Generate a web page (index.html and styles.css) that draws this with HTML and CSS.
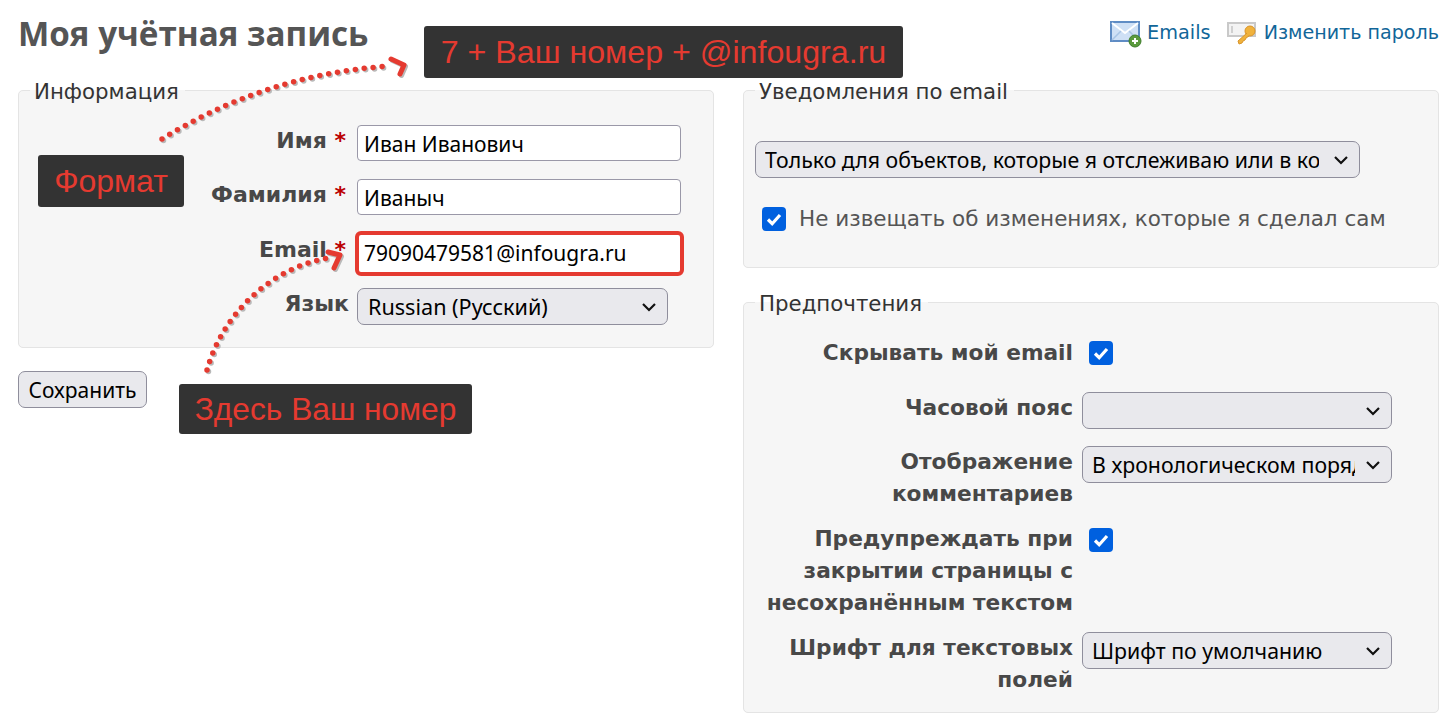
FILE: index.html
```html
<!DOCTYPE html>
<html lang="ru">
<head>
<meta charset="utf-8">
<title>Моя учётная запись</title>
<link rel="stylesheet" href="styles.css">
</head>
<body>
<div class="page">
  <header class="top">
    <h1>Моя учётная запись</h1>
    <nav class="links">
      <a href="#" class="link">
        <svg width="32" height="28" viewBox="0 0 32 28"><rect x="1" y="2" width="28" height="19" fill="#cfe0f5" stroke="#5f8cc4" stroke-width="2"/><path d="M2 3l13 10L28 3" fill="none" stroke="#fff" stroke-width="2"/><path d="M2 20l9-9M28 20l-9-9" stroke="#a8c4e6" stroke-width="1.5"/><circle cx="25" cy="21" r="6" fill="#5a9a3c" stroke="#3f7d2c"/><path d="M25 18v6M22 21h6" stroke="#fff" stroke-width="2"/></svg>
        Emails</a>
      <a href="#" class="link link-key">
        <svg width="30" height="26" viewBox="0 0 30 26"><rect x="1" y="3" width="27" height="13" fill="#f3f3f3" stroke="#c9c9c9" stroke-width="2"/><rect x="4" y="6" width="2" height="7" fill="#d0d0d0"/><circle cx="23" cy="11" r="5" fill="#f0b23c" stroke="#d9942a"/><path d="M20 13L11 21l1 3 3-1 1-2 2-1 1-2 3-2" fill="#f0b23c" stroke="#d9942a"/></svg>
        Изменить пароль</a>
    </nav>
  </header>

  <div class="columns">
    <div class="col">
      <fieldset class="box box-info">
        <legend>Информация</legend>
        <div class="row row-left"><label>Имя <em>*</em></label><input type="text" class="field" value="Иван Иванович"></div>
        <div class="row row-left"><label>Фамилия <em>*</em></label><input type="text" class="field" value="Иваныч"></div>
        <div class="row row-left"><label>Email <em>*</em></label><input type="text" class="field field-hot" value="79090479581@infougra.ru"></div>
        <div class="row row-left"><label>Язык</label>
          <div class="sel sel-lang"><select><option>Russian (Русский)</option></select>
            <svg class="chev" width="16" height="10" viewBox="0 0 16 10"><path d="M2 2l6 6 6-6" fill="none" stroke="#111" stroke-width="2.2"/></svg></div>
        </div>
      </fieldset>
      <button class="save" type="button">Сохранить</button>
    </div>

    <div class="col">
      <fieldset class="box box-notify">
        <legend>Уведомления по email</legend>
        <div class="sel sel-wide"><select><option>Только для объектов, которые я отслеживаю или в которых я участвую</option></select>
          <svg class="chev" width="16" height="10" viewBox="0 0 16 10"><path d="M2 2l6 6 6-6" fill="none" stroke="#111" stroke-width="2.2"/></svg></div>
        <div class="notify-check">
          <span class="check"><svg width="24" height="24" viewBox="0 0 24 24"><path d="M6 12.5l4.2 4.2L18 8" fill="none" stroke="#fff" stroke-width="3.2"/></svg></span>
          <span class="notify-text">Не извещать об изменениях, которые я сделал сам</span>
        </div>
      </fieldset>

      <fieldset class="box box-prefs">
        <legend>Предпочтения</legend>
        <div class="row row-right r1"><label>Скрывать мой email</label>
          <span class="check"><svg width="24" height="24" viewBox="0 0 24 24"><path d="M6 12.5l4.2 4.2L18 8" fill="none" stroke="#fff" stroke-width="3.2"/></svg></span></div>
        <div class="row row-right r2"><label>Часовой пояс</label>
          <div class="sel sel-pref"><select><option></option></select>
            <svg class="chev" width="16" height="10" viewBox="0 0 16 10"><path d="M2 2l6 6 6-6" fill="none" stroke="#111" stroke-width="2.2"/></svg></div></div>
        <div class="row row-right r3"><label>Отображение комментариев</label>
          <div class="sel sel-pref"><select><option>В хронологическом порядке</option></select>
            <svg class="chev" width="16" height="10" viewBox="0 0 16 10"><path d="M2 2l6 6 6-6" fill="none" stroke="#111" stroke-width="2.2"/></svg></div></div>
        <div class="row row-right r4"><label>Предупреждать при закрытии страницы с несохранённым текстом</label>
          <span class="check"><svg width="24" height="24" viewBox="0 0 24 24"><path d="M6 12.5l4.2 4.2L18 8" fill="none" stroke="#fff" stroke-width="3.2"/></svg></span></div>
        <div class="row row-right r5"><label>Шрифт для текстовых полей</label>
          <div class="sel sel-pref"><select><option>Шрифт по умолчанию</option></select>
            <svg class="chev" width="16" height="10" viewBox="0 0 16 10"><path d="M2 2l6 6 6-6" fill="none" stroke="#111" stroke-width="2.2"/></svg></div></div>
      </fieldset>
    </div>
  </div>

  <svg class="arrows" width="1455" height="723" viewBox="0 0 1455 723">
    <g transform="translate(1.5 1.5)" fill="none" stroke="#b9b9b9" stroke-linecap="round">
      <path class="dots" d="M162 139C225 100 300 72 390 66"/>
      <path class="head" d="M391 59l13 6-4 9"/>
      <path class="dots" d="M207 370C222 315 270 268 328 258"/>
      <path class="head" d="M328 252l12 3-6 13"/>
    </g>
    <g fill="none" stroke="#e53a30" stroke-linecap="round">
      <path class="dots" d="M162 139C225 100 300 72 390 66"/>
      <path class="head" d="M391 59l13 6-4 9"/>
      <path class="dots" d="M207 370C222 315 270 268 328 258"/>
      <path class="head" d="M328 252l12 3-6 13"/>
    </g>
  </svg>
  <div class="note note-top">7 + Ваш номер + @infougra.ru</div>
  <div class="note note-format">Формат</div>
  <div class="note note-here">Здесь Ваш номер</div>
</div>
</body>
</html>
```

FILE: styles.css
```css
* { box-sizing: border-box; }
html, body { margin: 0; padding: 0; background: #fff; }
body { font-family: "DejaVu Sans", Verdana, sans-serif; color: #484848; overflow: hidden; }
.page { position: relative; width: 1455px; height: 723px; padding: 0 16px 0 18px; overflow: hidden; }

.top { display: flex; justify-content: space-between; height: 78px; }
h1 { margin: 13px 0 0; font: bold 33.2px/42px "Open Sans", "DejaVu Sans", sans-serif; color: #555; }
.links { display: flex; gap: 16px; padding-top: 19px; }
.link { display: flex; align-items: flex-start; gap: 5px; color: #169; text-decoration: none; font-size: 19.3px; line-height: 28px; }
.link-key { gap: 7px; font-size: 19.1px; }
.link svg { flex: none; margin-top: 1px; }

.columns { display: grid; grid-template-columns: 696px 696px; column-gap: 29px; }
.col { display: flex; flex-direction: column; align-items: flex-start; }

.box { position: relative; width: 100%; margin: 0; background: #f6f6f6; border: 1px solid #e4e4e4; border-radius: 5px; min-width: 0; }
.box legend { height: 24px; padding: 0 6px 0 4px; margin-left: 11px; font-size: 21.3px; line-height: 28px; color: #333; }
.box-info { height: 270px; padding: 23px 0 0; }
.box-notify { height: 190px; padding: 39px 0 0; }
.box-prefs { height: 423px; margin-top: 22px; padding: 26px 0 0; }

.row { display: grid; align-items: start; }
.row label { font-weight: bold; font-size: 22px; line-height: 32px; text-align: right; color: #484848; }
.row em { font-style: normal; color: #b00; margin-right: 3px; }
.row-left { grid-template-columns: 330px auto; column-gap: 8px; height: 54.33px; }
.row-right { grid-template-columns: 329px auto; column-gap: 9px; }
.row-right label { font-size: 21.7px; }
.r1 { height: 52px; }
.r2 { height: 54px; }
.r3 { height: 81px; }
.r4 { height: 105px; }
.r5 { height: 80px; }
.r1 label { margin-top: -3px; }
.r4 label { margin-top: -4px; }

.field { width: 324px; height: 36px; padding: 2px 6px 0; border: 1px solid #9a98a8; border-radius: 4px; background: #fff; font: 21px/32px "Noto Sans", sans-serif; color: #000; outline: none; }
.field-hot { width: 329px; height: 45px; margin: -3px 0 0 -2px; padding: 0 5px; border: 4px solid #e53a30; border-radius: 6px; }

.sel { position: relative; height: 37px; }
.sel select { display: block; width: 100%; height: 100%; padding: 0 36px 0 9px; appearance: none; background: #e9e9ed; border: 1px solid #8f8e9c; border-radius: 7px; font: 21.3px "Noto Sans", sans-serif; color: #000; }
.chev { position: absolute; right: 11px; top: 14px; pointer-events: none; }
.sel-lang { width: 311px; }
.sel-lang select { padding-left: 10px; font-size: 21.6px; }
.sel-wide { width: 605px; margin-left: 11px; }
.sel-wide select { padding-right: 40px; }
.sel-pref { width: 310px; }

.check { display: inline-flex; flex: none; width: 24px; height: 24px; background: #0060df; border-radius: 4px; }
.row-right .check { margin: 1px 0 0 7px; }
.notify-check { display: flex; align-items: flex-start; gap: 13px; margin: 29px 0 0 18px; font-size: 21.5px; line-height: 24px; color: #555; }

.save { margin-top: 23px; width: 129px; height: 37px; padding: 0; background: #e9e9ed; border: 1px solid #8f8e9c; border-radius: 7px; font: 21px "Noto Sans", sans-serif; color: #000; }

.note { position: absolute; background: #333; border-radius: 3px; color: #e53a30; font-family: "Liberation Sans", Arial, sans-serif; text-align: center; white-space: nowrap; }
.note-top { left: 424px; top: 26px; width: 479px; height: 52px; font-size: 32.2px; line-height: 52px; }
.note-format { left: 38px; top: 155px; width: 146px; height: 52px; font-size: 32px; line-height: 52px; }
.note-here { left: 179px; top: 384px; width: 293px; height: 50px; font-size: 31.7px; line-height: 50px; }

.arrows { position: absolute; left: 0; top: 0; pointer-events: none; z-index: 1; }
.dots { stroke-width: 5.5; stroke-dasharray: 0 9; }
.head { stroke-width: 5; stroke-linejoin: round; }
```
